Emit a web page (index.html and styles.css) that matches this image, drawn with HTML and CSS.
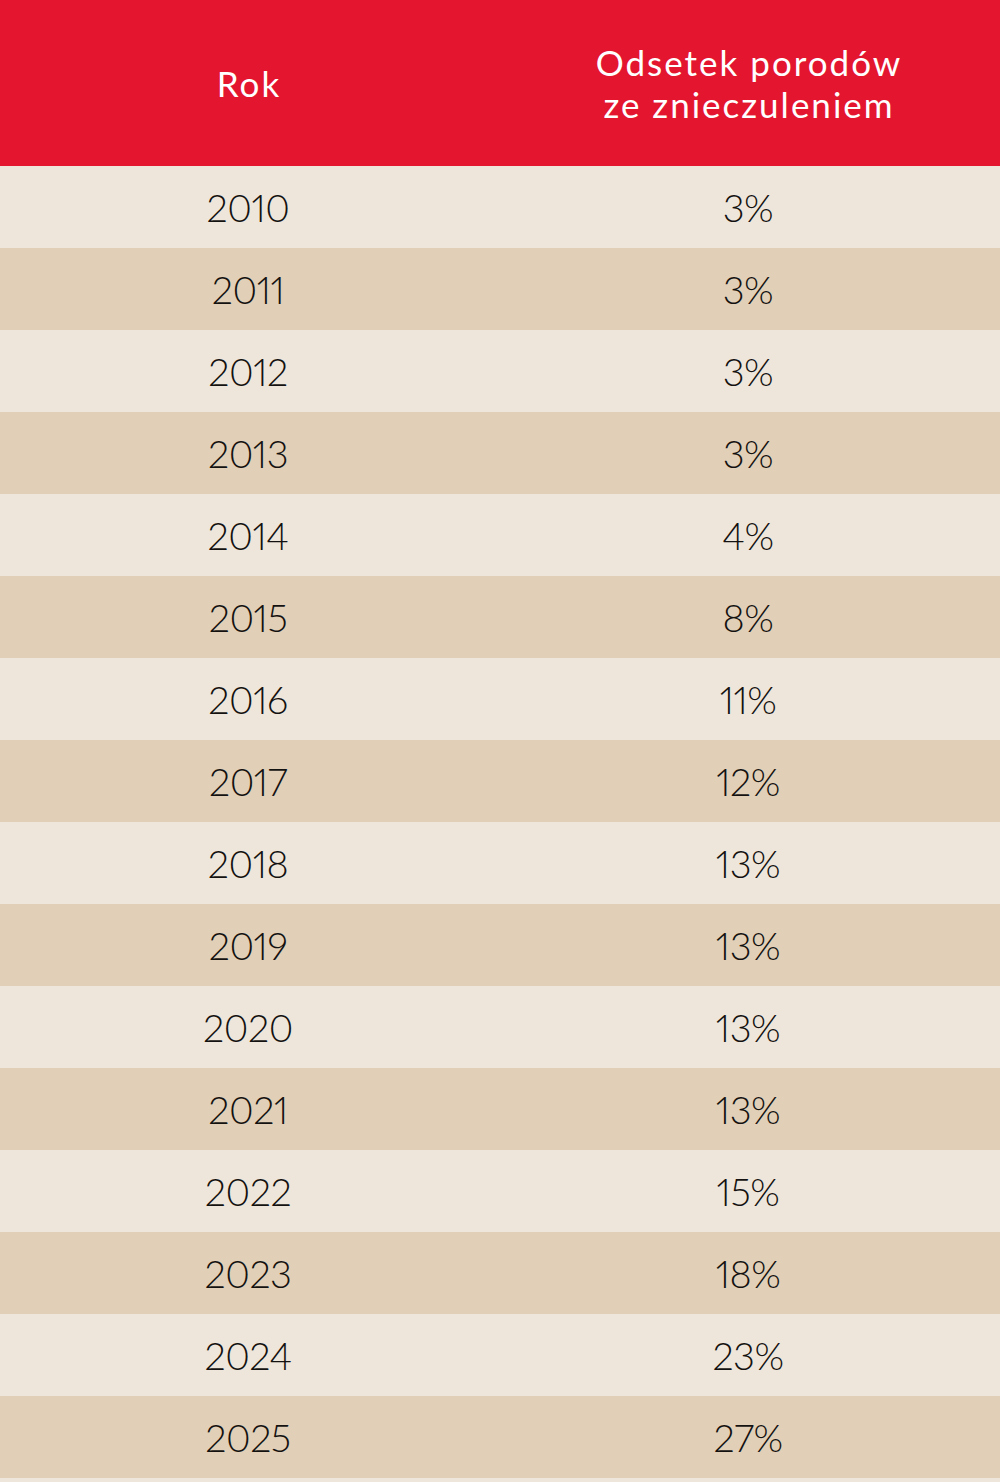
FILE: index.html
```html
<!DOCTYPE html>
<html lang="pl">
<head>
<meta charset="utf-8">
<title>Odsetek porodów ze znieczuleniem</title>
<link rel="stylesheet" href="styles.css">
</head>
<body>
<div class="table">
  <div class="row head">
    <div class="cell">Rok</div>
    <div class="cell">Odsetek porodów<br>ze znieczuleniem</div>
  </div>
  <div class="row light"><div class="cell">2010</div><div class="cell">3%</div></div>
  <div class="row dark"><div class="cell">2011</div><div class="cell">3%</div></div>
  <div class="row light"><div class="cell">2012</div><div class="cell">3%</div></div>
  <div class="row dark"><div class="cell">2013</div><div class="cell">3%</div></div>
  <div class="row light"><div class="cell">2014</div><div class="cell">4%</div></div>
  <div class="row dark"><div class="cell">2015</div><div class="cell">8%</div></div>
  <div class="row light"><div class="cell">2016</div><div class="cell">11%</div></div>
  <div class="row dark"><div class="cell">2017</div><div class="cell">12%</div></div>
  <div class="row light"><div class="cell">2018</div><div class="cell">13%</div></div>
  <div class="row dark"><div class="cell">2019</div><div class="cell">13%</div></div>
  <div class="row light"><div class="cell">2020</div><div class="cell">13%</div></div>
  <div class="row dark"><div class="cell">2021</div><div class="cell">13%</div></div>
  <div class="row light"><div class="cell">2022</div><div class="cell">15%</div></div>
  <div class="row dark"><div class="cell">2023</div><div class="cell">18%</div></div>
  <div class="row light"><div class="cell">2024</div><div class="cell">23%</div></div>
  <div class="row dark"><div class="cell">2025</div><div class="cell">27%</div></div>
</div>
</body>
</html>
```
FILE: styles.css
```css
html, body {
  margin: 0;
  padding: 0;
  background: #efe6db;
}
body {
  font-family: Lato, "Liberation Sans", sans-serif;
  color: #141210;
}
.table {
  width: 1000px;
}
.row {
  display: grid;
  grid-template-columns: 496px 504px;
  height: 82px;
  align-items: center;
}
.cell {
  text-align: center;
  font-size: 38px;
  font-weight: 300;
  line-height: 1;
  font-variant-numeric: proportional-nums;
  letter-spacing: -0.5px;
}
.head {
  height: 166px;
  background: #e4152f;
  color: #fff;
}
.head .cell {
  font-size: 35px;
  font-weight: 400;
  line-height: 42px;
  letter-spacing: 2px;
  padding-left: 2px;
}
.light {
  background: #efe6db;
}
.dark {
  background: #e1cfb7;
}
```
